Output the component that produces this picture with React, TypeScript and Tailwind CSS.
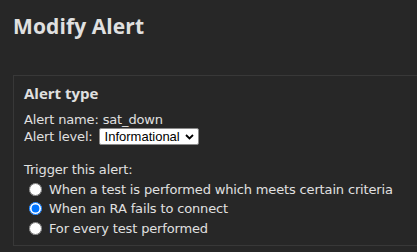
import React from "react";

const body = { fontFamily: '"DejaVu Sans", Verdana, sans-serif' };
const head = { fontFamily: '"Open Sans", "DejaVu Sans", sans-serif' };

export default function App() {
  return (
    <div className="w-screen h-screen overflow-hidden bg-[#272727] text-[#e0e0e0]">
      <div className="pl-[13px] pt-[12px]">
        <h1
          className="text-[21px] leading-[28px] font-bold text-[#e0e0e0] tracking-[0.1px]"
          style={head}
        >
          Modify Alert
        </h1>
        <div className="mt-[35px] w-[600px] border border-[#383838] pl-[10px] pt-[7px] pb-[7px]">
          <h2 className="text-[15px] leading-[20px] font-bold" style={head}>
            Alert type
          </h2>
          <div className="mt-[9px] text-[13px] leading-[16px] tracking-[-0.15px]" style={body}>
            <div>Alert name: sat_down</div>
            <div className="flex items-center h-[17px]">
              <span>Alert level:</span>
              <div className="ml-[6px] flex items-center h-[17px] w-[100px] bg-white border border-[#8a8a8a] rounded-[2px] tracking-normal">
                <select
                  defaultValue="Informational"
                  className="appearance-none bg-transparent text-black text-[13px] leading-[15px] pl-[5px] outline-none w-[83px]"
                  style={{ fontFamily: '"Liberation Sans", Arial, sans-serif' }}
                >
                  <option>Informational</option>
                  <option>Warning</option>
                  <option>Critical</option>
                </select>
                <svg width="9" height="6" viewBox="0 0 9 6" className="ml-[2px]">
                  <path d="M1 1l3.5 3.5L8 1" fill="none" stroke="#000" strokeWidth="1.8" />
                </svg>
              </div>
            </div>
          </div>
          <div className="mt-[15px] text-[13px] leading-[19.5px] tracking-[-0.15px]" style={body}>
            <div>Trigger this alert:</div>
            {[
              "When a test is performed which meets certain criteria",
              "When an RA fails to connect",
              "For every test performed",
            ].map((t, i) => (
              <label key={t} className="flex items-center h-[19.5px]">
                <input
                  type="radio"
                  name="trigger"
                  defaultChecked={i === 1}
                  className="m-0 ml-[5px] w-[13px] h-[13px]"
                />
                <span className="ml-[7px]">{t}</span>
              </label>
            ))}
          </div>
        </div>
      </div>
    </div>
  );
}
